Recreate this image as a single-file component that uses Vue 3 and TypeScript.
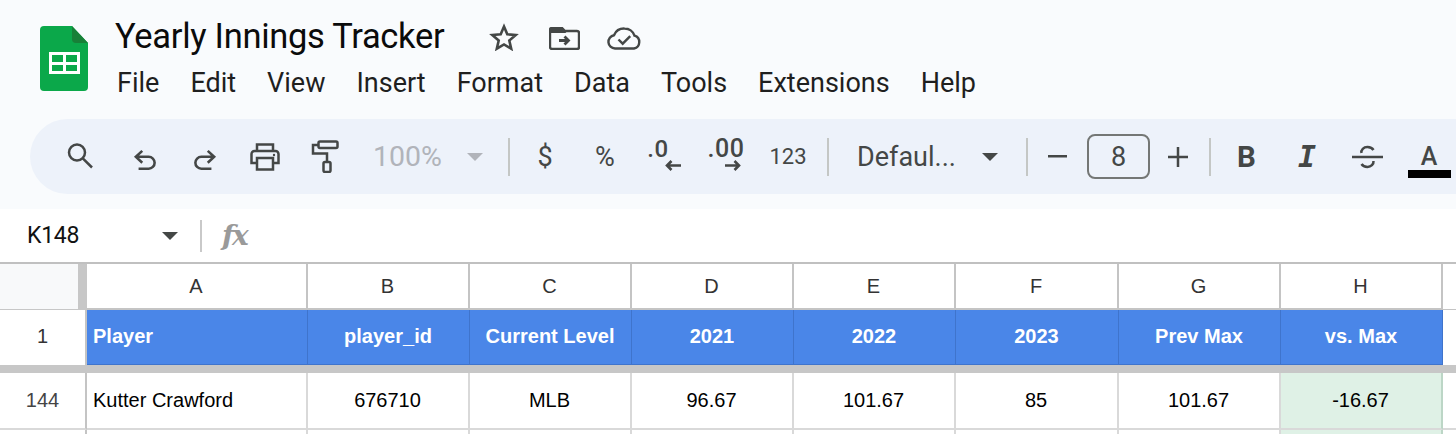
<script setup lang="ts">
const menus: string[] = ['File', 'Edit', 'View', 'Insert', 'Format', 'Data', 'Tools', 'Extensions', 'Help']
const cols: string[] = ['A', 'B', 'C', 'D', 'E', 'F', 'G', 'H']
const heads: string[] = ['Player', 'player_id', 'Current Level', '2021', '2022', '2023', 'Prev Max', 'vs. Max']
const row: string[] = ['Kutter Crawford', '676710', 'MLB', '96.67', '101.67', '85', '101.67', '-16.67']
</script>

<template>
  <div class="page">
    <header class="top">
      <svg class="logo" width="48" height="65" viewBox="0 0 48 65">
        <path d="M4 0H32L48 17V61a4 4 0 0 1-4 4H4a4 4 0 0 1-4-4V4a4 4 0 0 1 4-4Z" fill="#0ba84a" />
        <path d="M32 0L48 17H36a4 4 0 0 1-4-4Z" fill="#188038" />
        <rect x="9" y="26" width="31" height="22" fill="#fff" />
        <rect x="12" y="29" width="11" height="7" fill="#0ba84a" />
        <rect x="26" y="29" width="11" height="7" fill="#0ba84a" />
        <rect x="12" y="39" width="11" height="6" fill="#0ba84a" />
        <rect x="26" y="39" width="11" height="6" fill="#0ba84a" />
      </svg>
      <div class="titles">
        <div class="title-row">
          <span class="title">Yearly Innings Tracker</span>
          <svg class="star" width="30" height="28" viewBox="0 0 30 28" fill="none" stroke="#444746" stroke-width="2.6" stroke-linejoin="miter">
            <path d="M15 3.5l3.3 7.8 8.4.7-6.4 5.5 1.9 8.2L15 21.4l-7.2 4.3 1.9-8.2-6.4-5.5 8.4-.7Z" />
          </svg>
          <svg class="folder" width="31" height="23" viewBox="0 0 31 23">
            <path d="M3 1h10l3 3h12a2 2 0 0 1 2 2v14a2 2 0 0 1-2 2H3a2 2 0 0 1-2-2V3a2 2 0 0 1 2-2Z" fill="none" stroke="#444746" stroke-width="2.4" />
            <path d="M2 2h10l3 3H2Z" fill="#444746" stroke="#444746" stroke-width="2" />
            <path d="M10 13.500h9.500M15.500 9.500l4 4-4 4" fill="none" stroke="#444746" stroke-width="2.8" />
          </svg>
          <svg class="cloud" width="35" height="23" viewBox="0 0 35 23" fill="none" stroke="#444746" stroke-width="2.4">
            <path d="M8 21.5a6.7 6.7 0 0 1-1-13.3A11 11 0 0 1 17.5 1.5a10.5 10.5 0 0 1 10 7.200a6.600 6.600 0 0 1-.5 12.800Z" />
            <path d="M11.500 12.500l4.200 4.200 7.500-7.500" />
          </svg>
        </div>
        <nav class="menus">
          <span v-for="m in menus" :key="m">{{ m }}</span>
        </nav>
      </div>
    </header>

    <div class="toolbar">
      <span class="btn first">
        <svg width="28" height="28" viewBox="0 0 28 28" fill="none" stroke="#444746" stroke-width="2.500">
          <circle cx="11" cy="10.500" r="8" />
          <path d="M16.800 16.300L26 25.500" />
        </svg>
      </span>
      <span class="btn lower">
        <svg width="24" height="22" viewBox="0 0 26 24" fill="none" stroke="#444746" stroke-width="2.800">
          <path d="M10 2L3 8.500l7 6.500M3 8.500h14a6.500 6.500 0 0 1 0 13H6" />
        </svg>
      </span>
      <span class="btn lower">
        <svg width="24" height="22" viewBox="0 0 26 24" fill="none" stroke="#444746" stroke-width="2.800">
          <path d="M16 2l7 6.500L16 15M23 8.500H9a6.500 6.500 0 0 0 0 13h11" />
        </svg>
      </span>
      <span class="btn">
        <svg width="30" height="28" viewBox="0 0 30 28" fill="none" stroke="#444746" stroke-width="2.500">
          <path d="M7 8V1.500h16V8" />
          <path d="M7 20H1.500V11a3 3 0 0 1 3-3h21a3 3 0 0 1 3 3v9H23" />
          <path d="M7 15h16v11.500H7Z" />
          <circle cx="24" cy="12" r="1.200" fill="#444746" stroke="none" />
        </svg>
      </span>
      <span class="btn">
        <svg width="28" height="33" viewBox="0 0 28 33" fill="none" stroke="#444746" stroke-width="2.500">
          <rect x="7.500" y="1.500" width="19" height="6.500" rx="1.500" />
          <path d="M7 5H2v8.500h14V22" />
          <rect x="12.500" y="22" width="7" height="10" rx="1.500" />
        </svg>
      </span>
      <span class="zoom">
        <span class="zoom-text">100%</span>
        <i class="caret pale"></i>
      </span>
      <span class="sep after-zoom"></span>
      <span class="btn glyph">$</span>
      <span class="btn glyph">%</span>
      <span class="btn stack">
        <span class="dec">.0</span>
        <svg class="arr" width="16" height="11" viewBox="0 0 16 11" fill="none" stroke="#444746" stroke-width="2.600">
          <path d="M16 5.500H2M6.500 1L2 5.500 6.500 10" />
        </svg>
      </span>
      <span class="btn stack">
        <span class="dec wide">.00</span>
        <svg class="arr" width="16" height="11" viewBox="0 0 16 11" fill="none" stroke="#444746" stroke-width="2.600">
          <path d="M0 5.500h14M9.500 1L14 5.500 9.500 10" />
        </svg>
      </span>
      <span class="btn num">123</span>
      <span class="sep"></span>
      <span class="font-select">
        <span class="font-name">Defaul...</span>
        <i class="caret"></i>
      </span>
      <span class="sep after-font"></span>
      <span class="step minus"><svg width="19" height="3" viewBox="0 0 19 3"><rect width="19" height="2.500" fill="#444746" /></svg></span>
      <span class="size">8</span>
      <span class="step plus"><svg width="20" height="20" viewBox="0 0 20 20"><path d="M10 0v20M0 10h20" stroke="#444746" stroke-width="2.500" /></svg></span>
      <span class="sep after-plus"></span>
      <span class="fmt w71 bold">B</span>
      <span class="fmt w50 ital">I</span>
      <span class="fmt w70">
        <svg width="31" height="24" viewBox="0 0 31 24" fill="none" stroke="#444746" stroke-width="2.500">
          <path d="M0 12h31" />
          <path d="M9.500 8a6 5 0 0 1 6-6 7 5 0 0 1 6 3M21.500 16a6 5.500 0 0 1-6 6 7 5 0 0 1-6-3" />
        </svg>
      </span>
      <span class="fmt w54 color">
        <span class="color-a">A</span>
        <span class="color-bar"></span>
      </span>
    </div>

    <div class="formula">
      <span class="cell-name">K148</span>
      <i class="caret name-caret"></i>
      <span class="sep formula-sep"></span>
      <span class="fx">fx</span>
    </div>

    <div class="sheet">
      <div class="corner"></div>
      <div v-for="c in cols" :key="c" class="col-head">{{ c }}</div>
      <div class="rest head-rest"></div>

      <div class="row-head row-one">1</div>
      <div v-for="(h, i) in heads" :key="h" class="hcell" :class="{ left: i === 0 }">{{ h }}</div>
      <div class="rest blank"></div>

      <div class="freeze"></div>

      <div class="row-head num-row">144</div>
      <div v-for="(v, i) in row" :key="i" class="cell" :class="{ left: i === 0, green: i === 7 }">{{ v }}</div>
      <div class="rest data-rest"></div>

      <div class="row-head stub"></div>
      <div v-for="(v, i) in row" :key="'n' + i" class="cell stub" :class="{ green: i === 7 }"></div>
      <div class="rest stub"></div>
    </div>
  </div>
</template>

<style scoped>
.page {
  width: 1456px;
  height: 434px;
  overflow: hidden;
  background: #f9fbfd;
  font-family: Roboto, "Noto Sans", sans-serif;
  color: #1f1f1f;
}
.top {
  height: 119px;
  display: flex;
  box-sizing: border-box;
  padding: 26px 0 0 40px;
}
.logo { flex: none; }
.titles { margin-left: 27px; margin-top: -12px; }
.title-row { display: flex; align-items: center; height: 46px; }
.title { font-size: 34.500px; color: #0b0b0b; width: 347px; white-space: nowrap; letter-spacing: -0.3px; margin-top: -2px; }
.star { margin-left: 27px; margin-top: 0; }
.folder { margin-left: 30px; margin-top: 2px; }
.cloud { margin-left: 27px; margin-top: 2px; }
.menus { display: flex; gap: 31px; font-size: 27px; line-height: 30px; margin-top: 8px; color: #1f1f1f; margin-left: 2px; }

.toolbar {
  height: 75px;
  margin-left: 30px;
  width: 1500px;
  padding-left: 20px;
  box-sizing: border-box;
  display: flex;
  align-items: center;
  background: #edf2fa;
  border-radius: 38px 0 0 38px;
  color: #444746;
}
.btn {
  width: 60px;
  flex: none;
  display: flex;
  align-items: center;
  justify-content: center;
}
.first { margin-right: 5px; margin-top: -1px; }
.lower { margin-top: 6px; }
.zoom { width: 133px; flex: none; display: flex; align-items: center; padding-left: 18px; box-sizing: border-box; }
.zoom-text { font-size: 28.500px; color: #b1b4ba; width: 94px; white-space: nowrap; }
.caret {
  display: block;
  width: 0;
  height: 0;
  border-left: 8px solid transparent;
  border-right: 8px solid transparent;
  border-top: 8px solid #444746;
}
.caret.pale { border-top-color: #b1b4ba; }
.sep { width: 2px; height: 38px; background: #c4c7c5; flex: none; margin: 0 6px 0 6px; }
.sep.after-zoom { margin: 0 5px 0 20px; }
.glyph { font-size: 27px; }
.stack { flex-direction: column; height: 40px; position: relative; }
.dec { font-size: 24px; font-weight: 500; line-height: 22px; letter-spacing: 0.5px; margin-top: -4px; margin-left: -14px; }
.dec.wide { font-size: 25px; margin-left: 2px; }
.arr { margin-left: 16px; }
.num { width: 66px; font-size: 22px; }
.font-select { width: 168px; flex: none; padding-left: 22px; box-sizing: border-box; display: flex; align-items: center; }
.font-name { font-size: 27px; width: 125px; white-space: nowrap; }
.sep.after-font { margin: 0 0 0 23px; }
.step { display: flex; align-items: center; justify-content: center; flex: none; }
.minus { width: 59px; }
.plus { width: 56px; }
.size {
  width: 63px;
  height: 45px;
  box-sizing: border-box;
  border: 2px solid #747775;
  border-radius: 8px;
  flex: none;
  display: flex;
  align-items: center;
  justify-content: center;
  font-size: 27px;
}
.sep.after-plus { margin: 0 0 0 3px; }
.fmt { flex: none; display: flex; align-items: center; justify-content: center; }
.w50 { width: 50px; }
.w70 { width: 70px; }
.w71 { width: 71px; }
.w54 { width: 54px; }
.bold { font-size: 29.500px; font-weight: 700; }
.ital { font-family: "DejaVu Sans Mono", monospace; font-weight: 700; font-style: italic; font-size: 30px; }
.color { flex-direction: column; position: relative; }
.color-a { font-size: 25px; font-weight: 500; line-height: 26px; margin-top: -4px; }
.color-bar { display: block; flex: none; width: 43px; height: 8px; background: #000; margin-top: 0; margin-bottom: -12px; }

.formula {
  margin-top: 15px;
  height: 53px;
  background: #fff;
  display: flex;
  align-items: center;
  padding-left: 27px;
  box-sizing: border-box;
}
.cell-name { font-size: 23px; width: 135px; color: #111; letter-spacing: -0.3px; }
.sep.formula-sep { width: 2px; height: 32px; margin: 0 0 0 22px; background: #c9c9c9; }
.fx { font-family: "DejaVu Serif", serif; font-style: italic; font-weight: 700; font-size: 28px; color: #9a9a9a; margin-left: 20px; letter-spacing: -2px; }

.sheet {
  display: grid;
  grid-template-columns: 87px 221px 162px 162px 162px 162px 163px 162px 162px 13px;
  grid-template-rows: 46px 55px 8px 57px 4px;
  border-top: 2px solid #c0c0c0;
  background: #fff;
  font-family: "Liberation Sans", Arial, sans-serif;
  font-size: 20px;
  color: #000;
}
.sheet > div { box-sizing: border-box; display: flex; align-items: center; justify-content: center; }
.corner {
  background: #f8f9fa;
  border-right: 9px solid #c7c7c7;
  border-bottom: 1px solid #c7c7c7;
}
.col-head {
  color: #333;
  border-right: 2px solid #c4c4c4;
  border-bottom: 2px solid #c4c4c4;
  padding-right: 1px;
}
.rest.head-rest { border-bottom: 1px solid #c4c4c4; }
.row-head {
  color: #333;
  border-right: 2px solid #c4c4c4;
}
.row-one { padding-bottom: 2px; }
.num-row { color: #444; border-bottom: 2px solid #d9d9d9; }
.hcell {
  background: #4a86e8;
  color: #fff;
  font-weight: 700;
  border-right: 1px solid #3f74cc;
  border-bottom: 1px solid #3f74cc;
  padding: 0 1px 2px 0;
}
.freeze { grid-column: 1 / -1; background: #c7c7c7; }
.cell {
  border-right: 2px solid #d9d9d9;
  border-bottom: 2px solid #d9d9d9;
  padding-right: 1px;
}
.sheet > .left { justify-content: flex-start; padding-left: 6px; }
.cell.green { background: #dff1e6; border-right-color: #bcd6c6; }
.data-rest { border-bottom: 2px solid #d9d9d9; }
.sheet > .stub { border-bottom: 0; }
</style>
